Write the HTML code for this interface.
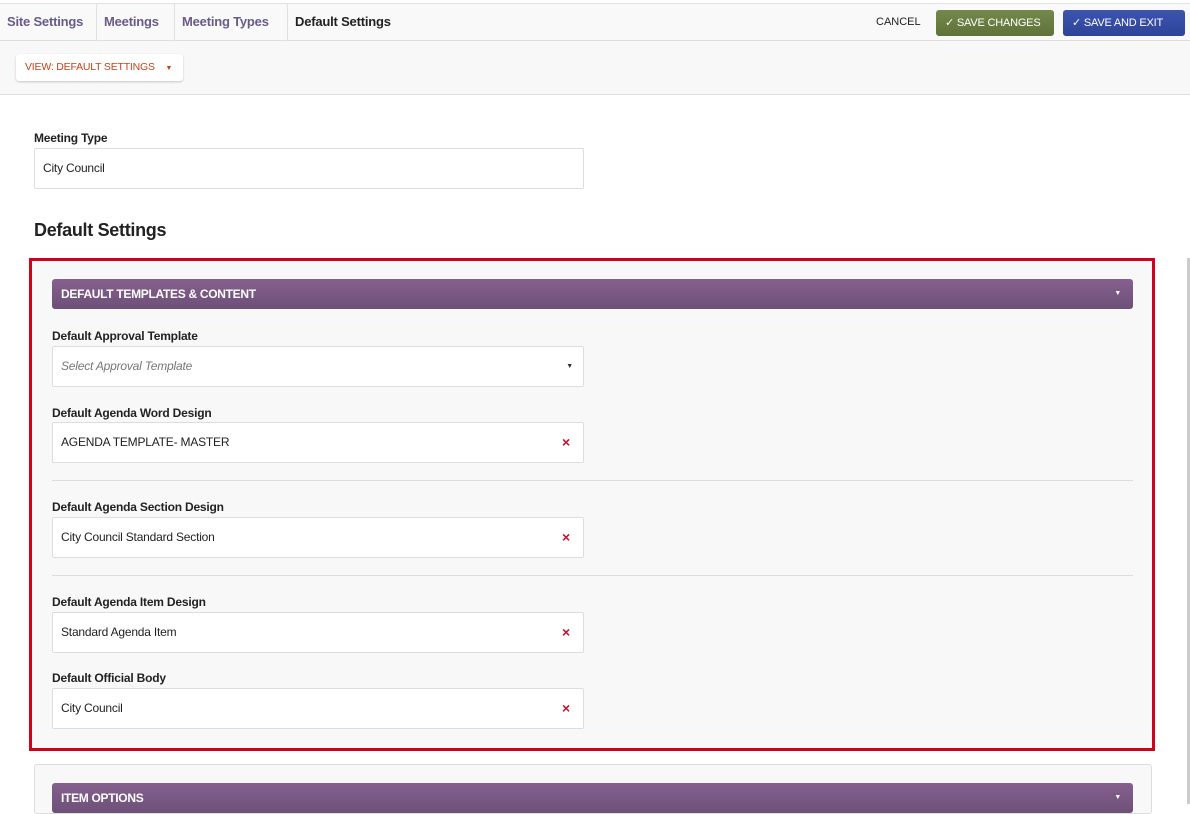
<!DOCTYPE html>
<html><head><meta charset="utf-8"><style>
*{box-sizing:border-box;margin:0;padding:0}
body{width:1190px;height:804px;overflow:hidden;background:#fff;font-family:"Liberation Sans",sans-serif;position:relative;color:#222;white-space:nowrap}
.abs{position:absolute}
.top{left:0;top:3px;width:1190px;height:38px;background:#f9f9f9;border-top:1px solid #e2e2e2;border-bottom:1px solid #ddd}
.tab{position:absolute;top:0;height:37px;line-height:36px;font-size:13px;font-weight:bold;color:#6a5a8a;border-right:1px solid #e0e0e0;padding-left:7px;letter-spacing:-0.2px}
.bar2{left:0;top:41px;width:1190px;height:54px;background:#f8f8f8;border-bottom:1px solid #ddd}
.view{left:16px;top:54px;width:167px;height:27px;background:#fff;border-radius:3px;box-shadow:0 1px 2px rgba(0,0,0,.2);font-size:10.5px;color:#c0441a;line-height:27px;padding-left:9px;letter-spacing:-0.2px}
.btn{top:10px;height:26px;border-radius:3px;color:#fff;font-size:11px;line-height:26px;padding-left:9px;letter-spacing:-0.2px}
.lbl{font-size:12px;font-weight:bold;color:#222;letter-spacing:-0.2px}
.inp{background:#fff;border:1px solid #ddd;border-radius:2px;height:41px;font-size:12px;line-height:39px;padding-left:8px;width:532px;left:52px;letter-spacing:-0.2px}
.x{position:absolute;right:13px;top:0;color:#c8102e;font-size:14px;font-weight:bold}
.ph{background:linear-gradient(#86608e,#6c5078);border-radius:3px;color:#fff;font-weight:bold;font-size:12px;padding-left:9px;line-height:30px;height:30px;left:52px;width:1081px;letter-spacing:-0.3px}
.hr{left:52px;width:1081px;height:1px;background:#ddd}
</style></head><body>
<div class="abs top">
<div class="tab" style="left:0;width:97px">Site Settings</div>
<div class="tab" style="left:97px;width:78px">Meetings</div>
<div class="tab" style="left:175px;width:113px">Meeting Types</div>
<div class="tab" style="left:288px;color:#222;border:none">Default Settings</div>
</div>
<div class="abs" style="left:876px;top:16px;font-size:11px;color:#222">CANCEL</div>
<div class="abs btn" style="left:936px;width:118px;background:linear-gradient(#74894c,#5f7239)">✓ SAVE CHANGES</div>
<div class="abs btn" style="left:1063px;width:122px;background:linear-gradient(#3d54b0,#2e4498)">✓ SAVE AND EXIT</div>
<div class="abs bar2"></div>
<div class="abs view">VIEW: DEFAULT SETTINGS <span style="margin-left:8px;font-size:7px">▼</span></div>
<div class="abs lbl" style="left:34px;top:131px">Meeting Type</div>
<div class="abs inp" style="left:34px;top:148px;width:550px">City Council</div>
<div class="abs" style="left:34px;top:220px;font-size:18px;font-weight:bold;letter-spacing:-0.3px">Default Settings</div>
<div class="abs" style="left:29px;top:258px;width:1126px;height:493px;border:3px solid #d0021b;background:#f8f8f8"></div>
<div class="abs ph" style="top:279px">DEFAULT TEMPLATES &amp; CONTENT<span style="position:absolute;right:12px;font-size:7px">▼</span></div>
<div class="abs lbl" style="left:52px;top:329px">Default Approval Template</div>
<div class="abs inp" style="top:346px;color:#777;font-style:italic">Select Approval Template<span style="position:absolute;right:10px;font-style:normal;font-size:7px;color:#333">▼</span></div>
<div class="abs lbl" style="left:52px;top:406px">Default Agenda Word Design</div>
<div class="abs inp" style="top:422px">AGENDA TEMPLATE- MASTER<span class="x">×</span></div>
<div class="abs hr" style="top:480px"></div>
<div class="abs lbl" style="left:52px;top:500px">Default Agenda Section Design</div>
<div class="abs inp" style="top:517px">City Council Standard Section<span class="x">×</span></div>
<div class="abs hr" style="top:575px"></div>
<div class="abs lbl" style="left:52px;top:595px">Default Agenda Item Design</div>
<div class="abs inp" style="top:612px">Standard Agenda Item<span class="x">×</span></div>
<div class="abs lbl" style="left:52px;top:671px">Default Official Body</div>
<div class="abs inp" style="top:688px">City Council<span class="x">×</span></div>
<div class="abs" style="left:34px;top:764px;width:1118px;height:50px;background:#f8f8f8;border:1px solid #ddd;border-radius:3px"></div>
<div class="abs ph" style="top:783px">ITEM OPTIONS<span style="position:absolute;right:12px;font-size:7px">▼</span></div>
<div class="abs" style="left:1187px;top:258px;width:3px;height:546px;background:#ccc"></div>
</body></html>
